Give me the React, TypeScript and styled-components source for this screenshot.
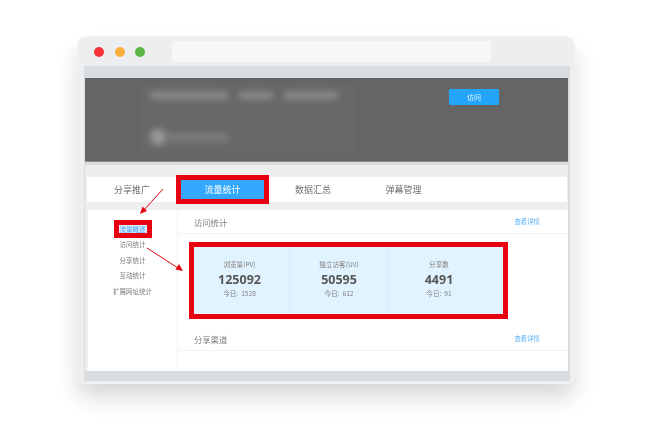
import React from 'react'
import styled, { createGlobalStyle } from 'styled-components'

const GlobalStyle = createGlobalStyle`
  html, body {
    margin: 0;
    padding: 0;
    background: #fff;
    font-family: "Noto Sans CJK SC", "Liberation Sans", sans-serif;
  }
`

const Page = styled.div`
  position: relative;
  width: 660px;
  height: 430px;
  padding: 37px 0 0 78px;
  box-sizing: border-box;
  overflow: hidden;
`

const Window = styled.div`
  width: 496px;
  height: 346px;
  padding: 0 4px 2px 6px;
  box-sizing: border-box;
  background: #eceef0;
  border-radius: 8px;
  box-shadow: 0 0 0 1px #f3f4f5, 0 14px 22px rgba(0, 0, 0, 0.16);
  display: flex;
  flex-direction: column;
  filter: blur(0.3px);
`

const TitleBar = styled.div`
  height: 29px;
  flex: none;
  display: flex;
  align-items: center;
  padding-left: 10px;
`

const Dot = styled.span<{ $color: string }>`
  width: 10px;
  height: 10px;
  margin-right: 10.5px;
  border-radius: 50%;
  background: ${(p) => p.$color};
`

const AddressBar = styled.div`
  width: 319px;
  height: 21px;
  margin-left: 16px;
  background: #f6f7f8;
  border-radius: 2px;
`

const Screen = styled.div`
  flex: 1;
  padding: 12px 2px 10px 1px;
  background: #dadde0;
  display: flex;
  flex-direction: column;
  min-height: 0;
`

const Banner = styled.div`
  height: 84px;
  flex: none;
  padding: 6px 69px 0 56px;
  box-sizing: border-box;
  background: #656565;
  border-bottom: 1px solid #8f8f8f;
  display: flex;
  justify-content: space-between;
  align-items: flex-start;
`

const BlurPanel = styled.div`
  width: 213px;
  height: 69px;
  padding: 6px 0 0 9px;
  box-sizing: border-box;
  background: #686868;
  display: flex;
  flex-direction: column;
  gap: 32px;
`

const BlurRow = styled.div`
  display: flex;
  align-items: center;
  gap: 11px;
  height: 10px;
`

const BlurBar = styled.div<{ $width: number; $tone?: string }>`
  width: ${(p) => p.$width}px;
  height: 7px;
  border-radius: 3px;
  background: ${(p) => p.$tone || '#909090'};
  filter: blur(3.5px);
`

const BlurAvatar = styled.div`
  width: 17px;
  height: 16px;
  margin-right: -11px;
  border-radius: 50%;
  background: #9a9a9a;
  filter: blur(3.5px);
`

const VisitButton = styled.div`
  width: 50px;
  height: 16px;
  margin-top: 5px;
  background: #22a5fb;
  color: #e8f5ff;
  font-size: 7px;
  line-height: 16px;
  text-align: center;
  border-radius: 1px;
`

const Content = styled.div`
  flex: 1;
  min-height: 0;
  margin-top: 3px;
  padding: 12px 0 0 2px;
  background: #eeeeee;
  display: flex;
  flex-direction: column;
`

const Tabs = styled.div`
  height: 25px;
  flex: none;
  padding-left: 3.5px;
  margin-right: 1px;
  background: #fff;
  display: flex;
  align-items: center;
  gap: 7.5px;
`

const Tab = styled.div<{ $active?: boolean }>`
  width: 83px;
  height: 19px;
  font-size: 9px;
  line-height: 19px;
  text-align: center;
  color: ${(p) => (p.$active ? '#fff' : '#707070')};
  background: ${(p) => (p.$active ? '#33a9fd' : 'transparent')};
  outline: ${(p) => (p.$active ? '5px solid #e60012' : 'none')};
`

const Body = styled.div`
  flex: 1;
  min-height: 0;
  margin-top: 8px;
  margin-left: 1px;
  display: flex;
  background: #fff;
`

const Sidebar = styled.div`
  width: 90px;
  flex: none;
  padding-top: 11.6px;
  box-sizing: border-box;
  border-right: 1px solid #f2f2f2;
`

const SideItem = styled.div`
  height: 15.6px;
  font-size: 6.5px;
  line-height: 15.6px;
  text-align: center;
  color: #7a7a7a;
`

const ActiveLabel = styled.span`
  display: inline-block;
  height: 8px;
  width: 28px;
  line-height: 8px;
  color: #3f9ff5;
  background: #d8ecfc;
  outline: 5px solid #e60012;
`

const Main = styled.div`
  flex: 1;
  min-width: 0;
`

const SectionHead = styled.div`
  height: 23px;
  padding: 0 28px 0 16px;
  border-bottom: 1px solid #f3f3f3;
  display: flex;
  justify-content: space-between;
  align-items: center;
`

const SectionTitle = styled.div`
  font-size: 8.3px;
  color: #808080;
`

const DetailLink = styled.div`
  font-size: 6.4px;
  color: #56aef5;
`

const StatsBox = styled.div`
  width: 309px;
  height: 67px;
  margin: 13px 0 13px 16px;
  background: #e1f3fe;
  outline: 5px solid #e60012;
  display: flex;
  padding: 2px 0;
  box-sizing: border-box;
`

const StatCell = styled.div<{ $width: number; $divider?: boolean; $inset?: number }>`
  width: ${(p) => p.$width}px;
  flex: none;
  box-sizing: border-box;
  border-right: ${(p) => (p.$divider ? '1px solid #d9e8f2' : 'none')};
  display: flex;
  flex-direction: column;
  align-items: center;
  padding: 11px ${(p) => p.$inset || 0}px 0 0;
`

const StatLabel = styled.div`
  font-size: 6.6px;
  line-height: 9px;
  color: #808080;
`

const StatValue = styled.div`
  margin-top: 1px;
  font-family: "Open Sans", "Noto Sans", sans-serif;
  font-size: 12.5px;
  line-height: 19px;
  font-weight: 700;
  color: #575757;
`

const StatToday = styled.div`
  font-size: 6.6px;
  line-height: 9px;
  color: #808080;
  white-space: pre;
`

const Arrows = styled.svg`
  position: absolute;
  inset: 0;
  pointer-events: none;
`

const stats = [
  { label: '浏览量(PV)', value: '125092', today: '今日:  1528', width: 96, divider: true, inset: 4 },
  { label: '独立访客(UV)', value: '50595', today: '今日:  612', width: 99, divider: true, inset: 0 },
  { label: '分享数', value: '4491', today: '今日:  91', width: 100, divider: false, inset: 0 },
]

const sideItems = ['访问统计', '分享统计', '互动统计', '扩展网址统计']

export default function App() {
  return (
    <Page>
      <GlobalStyle />
      <Window>
        <TitleBar>
          <Dot $color="#f9333c" />
          <Dot $color="#fbb040" />
          <Dot $color="#5cb445" />
          <AddressBar />
        </TitleBar>
        <Screen>
          <Banner>
            <BlurPanel>
              <BlurRow>
                <BlurBar $width={78} />
                <BlurBar $width={34} />
                <BlurBar $width={54} />
              </BlurRow>
              <BlurRow>
                <BlurAvatar />
                <BlurBar $width={62} $tone="#808080" />
              </BlurRow>
            </BlurPanel>
            <VisitButton>访问</VisitButton>
          </Banner>
          <Content>
            <Tabs>
              <Tab>分享推广</Tab>
              <Tab $active>流量统计</Tab>
              <Tab>数据汇总</Tab>
              <Tab>弹幕管理</Tab>
            </Tabs>
            <Body>
              <Sidebar>
                <SideItem>
                  <ActiveLabel>流量概述</ActiveLabel>
                </SideItem>
                {sideItems.map((item) => (
                  <SideItem key={item}>{item}</SideItem>
                ))}
              </Sidebar>
              <Main>
                <SectionHead>
                  <SectionTitle>访问统计</SectionTitle>
                  <DetailLink>查看详情</DetailLink>
                </SectionHead>
                <StatsBox>
                  {stats.map((s) => (
                    <StatCell key={s.label} $width={s.width} $divider={s.divider} $inset={s.inset}>
                      <StatLabel>{s.label}</StatLabel>
                      <StatValue>{s.value}</StatValue>
                      <StatToday>{s.today}</StatToday>
                    </StatCell>
                  ))}
                </StatsBox>
                <SectionHead>
                  <SectionTitle>分享渠道</SectionTitle>
                  <DetailLink>查看详情</DetailLink>
                </SectionHead>
              </Main>
            </Body>
          </Content>
        </Screen>
      </Window>
      <Arrows width="660" height="430" viewBox="0 0 660 430">
        <path d="M163 189 L144 210" stroke="#e60012" strokeWidth="1" fill="none" />
        <path d="M140 214 L142.5 206.5 L147 211 Z" fill="#e60012" />
        <path d="M147 248 L178 268" stroke="#e60012" strokeWidth="1" fill="none" />
        <path d="M183 271 L175.5 269.5 L179 264 Z" fill="#e60012" />
      </Arrows>
    </Page>
  )
}
